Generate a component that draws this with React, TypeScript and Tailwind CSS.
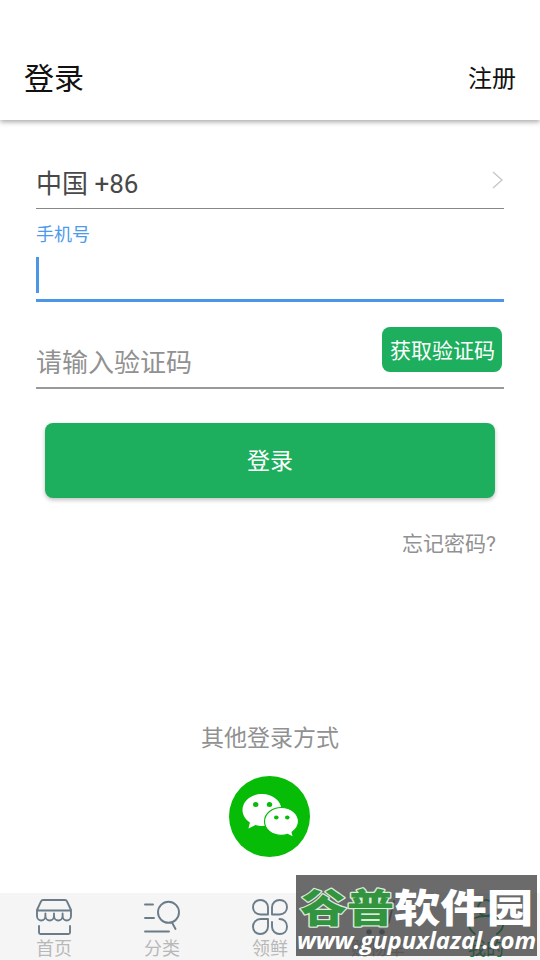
import React from "react";

const STROKE = "#6b7c89";

function StoreIcon() {
  return (
    <svg width="36" height="36" viewBox="0 0 36 36" fill="none" stroke={STROKE} strokeWidth="1.9" strokeLinecap="round" strokeLinejoin="round">
      <path d="M7 1H29C30 1 30.6 1.5 31 2.3L35 11V17C35 19.5 33 21.5 30.8 21.5C28.4 21.5 26.6 19.5 26.6 17C26.6 19.5 24.6 21.5 22.3 21.5C19.9 21.5 18 19.5 18 17C18 19.5 16.1 21.5 13.7 21.5C11.4 21.5 9.4 19.5 9.4 17C9.4 19.5 7.6 21.5 5.2 21.5C3 21.5 1 19.5 1 17V11L5 2.3C5.4 1.5 6 1 7 1ZM1 11.5H35M9.4 14.5V17M18 14.5V17M26.6 14.5V17" />
      <path d="M3 27V33.5C3 34.5 3.5 35 4.5 35H32.5C33.5 35 34 34.5 34 33.5V27" />
    </svg>
  );
}

function CategoryIcon() {
  return (
    <svg width="36" height="36" viewBox="0 0 36 36" fill="none" stroke={STROKE} strokeWidth="1.9" strokeLinecap="round">
      <path d="M1 5.5H9M1 19H10M1 32.5H25M28 23.5L31.5 30" />
      <circle cx="24.5" cy="13.3" r="10.5" />
    </svg>
  );
}

function CloverIcon() {
  return (
    <svg width="36" height="36" viewBox="0 0 36 36" fill="none" stroke={STROKE} strokeWidth="1.9" strokeLinecap="round" strokeLinejoin="round">
      <path d="M16 15.5H8.5C4 15.5 1 12.3 1 8.3C1 4 4 1 8.3 1C12.5 1 16 4 16 8.5Z" />
      <path d="M20 15.5V8.5C20 4 23.5 1 27.7 1C32 1 35 4 35 8.3C35 12.3 32 15.5 27.5 15.5Z" />
      <path d="M16 20V27.5C16 32 12.5 35 8.3 35C4 35 1 32 1 27.7C1 23.7 4 20 8.5 20Z" />
      <path d="M20 23V27.5C20 32 23.5 35 27.7 35C32 35 35 32 35 27.7C35 23.3 32 20 27.5 20" />
    </svg>
  );
}

function CartIcon() {
  return (
    <svg width="36" height="36" viewBox="0 0 36 36" fill="none" stroke={STROKE} strokeWidth="1.9" strokeLinecap="round" strokeLinejoin="round">
      <path d="M34 2L29 23C28.6 24.5 28 25 26.5 25H8L2 9H26" />
      <circle cx="9" cy="33" r="1.8" fill={STROKE} />
      <circle cx="22" cy="33" r="1.8" fill={STROKE} />
    </svg>
  );
}

function UserIcon() {
  return (
    <svg width="36" height="36" viewBox="0 0 36 36" fill="none" stroke="#009a45" strokeWidth="1.9" strokeLinecap="round">
      <circle cx="18" cy="9" r="8" />
      <path d="M7 35C3 32 1 29 1 26C2 20 9 17 18 17C27 17 34 20 35 26C35 29 33 32 29 35" />
    </svg>
  );
}

function WechatIcon() {
  return (
    <svg width="81" height="81" viewBox="0.5 0.5 81 81">
      <circle cx="41" cy="41" r="40.5" fill="#06bc07" />
      <path d="M33.5 18.5C22.8 18.5 14 25.6 14 34.6C14 39.6 16.8 44 21.4 47L20 52.9L27 49.6C29 50.2 31.2 50.6 33.5 50.6C44.3 50.6 53 43.5 53 34.6C53 25.6 44.3 18.5 33.5 18.5Z" fill="#fff" />
      <path d="M53 32C62.4 32 70 38 70 46C70 50.3 67.4 54 63.6 56.7L65 61.8L59 58.9C57.2 59.5 55.2 59.9 53 59.9C43.6 59.9 36 54 36 46C36 38 43.6 32 53 32Z" fill="#fff" stroke="#06bc07" strokeWidth="1.2" />
      <ellipse cx="27.2" cy="29" rx="2.7" ry="2.5" fill="#06bc07" />
      <ellipse cx="41" cy="29" rx="2.7" ry="2.5" fill="#06bc07" />
      <ellipse cx="47.8" cy="42" rx="2.3" ry="2" fill="#06bc07" />
      <ellipse cx="58.8" cy="42" rx="2.3" ry="2" fill="#06bc07" />
    </svg>
  );
}

const tabs = [
  { label: "首页", icon: <StoreIcon />, color: "text-[#b8b8b8]" },
  { label: "分类", icon: <CategoryIcon />, color: "text-[#b8b8b8]" },
  { label: "领鲜", icon: <CloverIcon />, color: "text-[#b8b8b8]" },
  { label: "购物车", icon: <CartIcon />, color: "text-[#b8b8b8]" },
  { label: "我的", icon: <UserIcon />, color: "text-[#009a45]" },
];

function Watermark() {
  return (
    <div className="absolute top-[875px] left-[296px] h-[81px] w-[241px] bg-[#3a3a3a]/75">
      <svg className="block" width="241" height="81" viewBox="0 0 241 81">
        <g fontFamily="'Noto Sans CJK SC', sans-serif" fontWeight="900" fontSize="39" strokeLinejoin="round">
          <text x="4" y="47" textLength="94" lengthAdjust="spacingAndGlyphs" fill="#33943f" stroke="#dcebdc" strokeWidth="2.4" paintOrder="stroke">谷普</text>
          <text x="98" y="47" textLength="139" lengthAdjust="spacingAndGlyphs" fill="#fff">软件园</text>
        </g>
        <text x="1" y="74" textLength="239" lengthAdjust="spacingAndGlyphs" fill="#fff" fontFamily="'Open Sans', sans-serif" fontWeight="700" fontStyle="italic" fontSize="24">www.gupuxlazal.com</text>
      </svg>
    </div>
  );
}

export default function App() {
  return (
    <div className="relative flex h-[960px] w-[540px] flex-col overflow-hidden bg-white font-[Roboto,'Noto_Sans_CJK_SC',sans-serif]">
      <header className="flex h-[120px] shrink-0 items-start justify-between px-6 pt-[59px] text-[#111] shadow-[0_2px_5px_rgba(0,0,0,0.34)]">
        <h1 className="text-[30px] leading-10">登录</h1>
        <button className="text-[24px] leading-10">注册</button>
      </header>

      <main className="flex flex-1 flex-col px-9">
        <div className="flex h-[89px] items-end justify-between border-b border-[#888] pb-1 text-[26px] leading-10 text-[#484848]">
          <span>中国 +86</span>
          <svg className="mb-[14px]" width="12" height="20" viewBox="0 0 12 20" fill="none" stroke="#c8c8c8" strokeWidth="1.4">
            <path d="M1 2L10 10L1 18" />
          </svg>
        </div>

        <div className="h-[93px] border-b-3 border-[#4c96e8] pt-[14px]">
          <label className="block text-[18px] leading-6 text-[#4c9aec]">手机号</label>
          <div className="mt-[10px] h-9 w-[3px] bg-[#4c96e8]" />
        </div>

        <div className="flex h-[87px] items-start justify-between border-b-2 border-[#999] pt-[25px]">
          <span className="pt-4 text-[26px] leading-10 text-[#919191]">请输入验证码</span>
          <button className="mr-0.5 h-[45px] w-[120px] rounded-lg bg-[#1daf5d] pt-px pl-px text-[21px] leading-[47px] text-white">获取验证码</button>
        </div>

        <button className="mx-[9px] mt-[34px] h-[75px] rounded-lg bg-[#1daf5d] pt-px text-[23px] leading-[76px] text-white shadow-[0_2px_4px_rgba(0,0,0,0.25)]">登录</button>
        <a className="mt-[30px] mr-[8px] self-end text-[21px] leading-8 text-[#919191]">忘记密码?</a>

        <section className="mt-[163px] flex flex-col items-center">
          <p className="text-[23px] leading-8 text-[#919191]">其他登录方式</p>
          <button className="mt-[21px] mr-px"><WechatIcon /></button>
        </section>
      </main>

      <nav className="grid h-[67px] shrink-0 grid-cols-5 bg-[#f5f5f5]">
        {tabs.map((tab) => (
          <div key={tab.label} className="flex flex-col items-center pt-1.5">
            {tab.icon}
            <span className={`mt-0.5 text-[18px] leading-6 ${tab.color}`}>{tab.label}</span>
          </div>
        ))}
      </nav>
      <Watermark />
    </div>
  );
}
